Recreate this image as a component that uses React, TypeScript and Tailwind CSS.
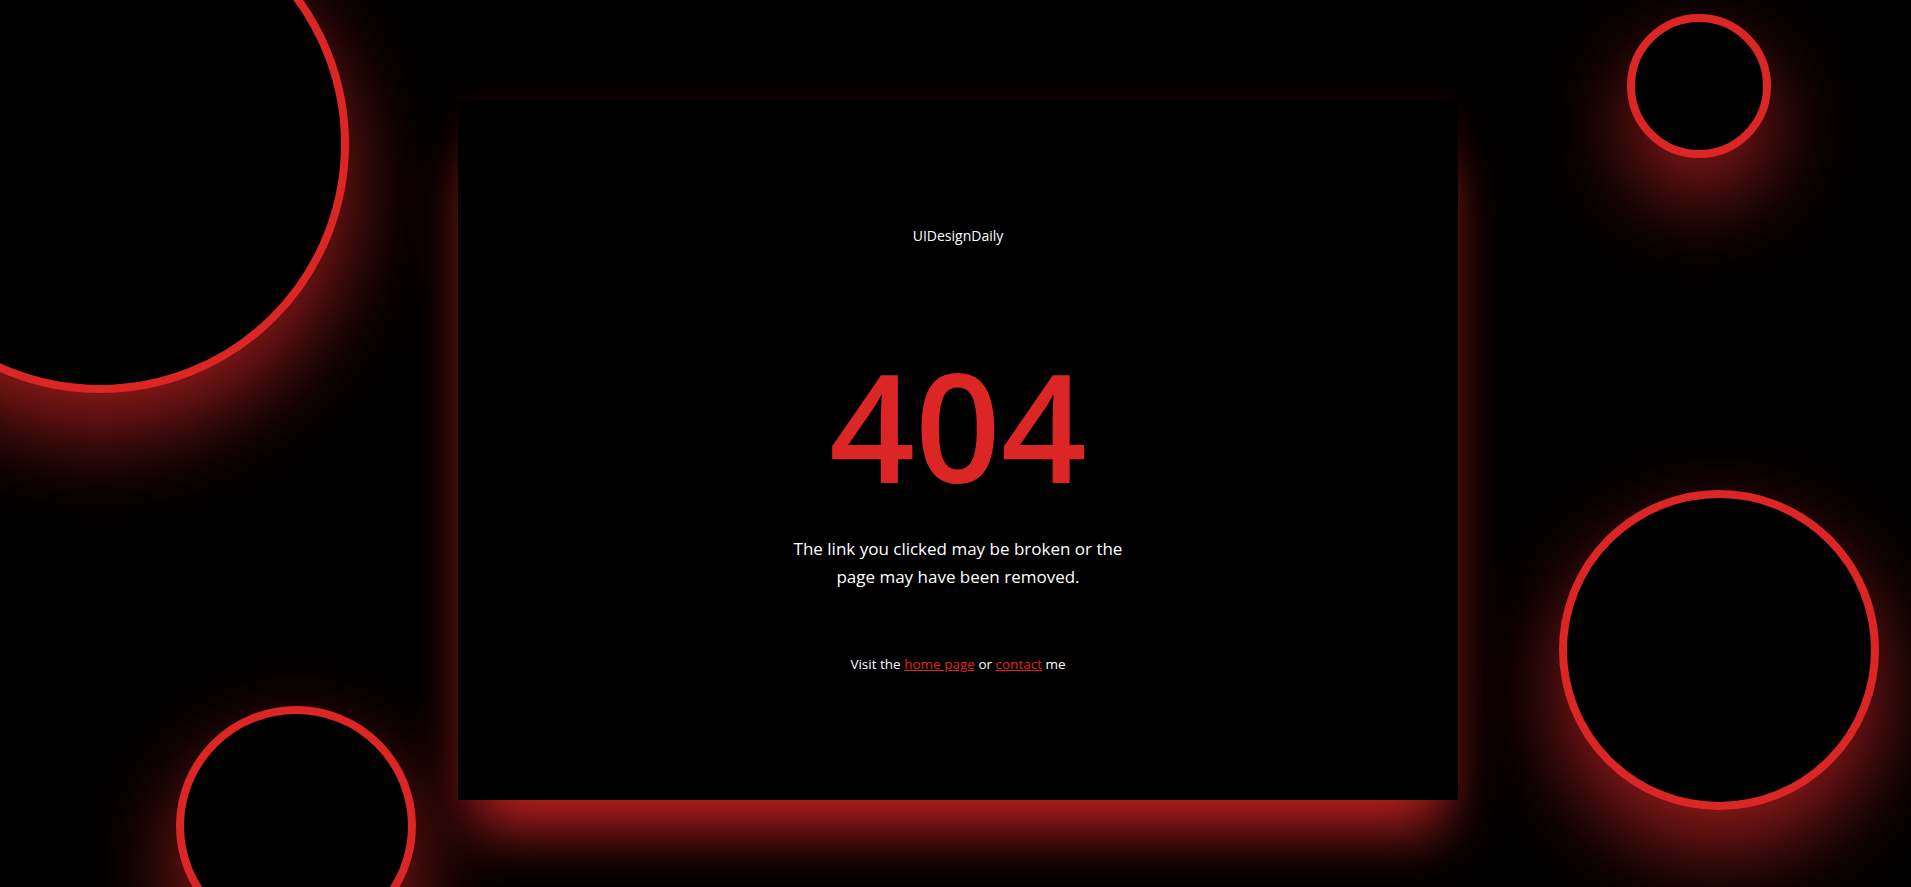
export default function App() {
  return (
    <div className="relative h-screen w-full overflow-hidden bg-black font-['Open_Sans',sans-serif]">
      {/* glowing rings */}
      <div className="absolute left-[-149px] top-[-105px] h-[498px] w-[498px] rounded-full border-[8px] border-[#dc2626] bg-black shadow-[0_40px_90px_rgba(220,38,38,0.7)]" />
      <div className="absolute left-[1627px] top-[14px] h-[144px] w-[144px] rounded-full border-[8px] border-[#dc2626] bg-black shadow-[0_40px_90px_rgba(220,38,38,0.7)]" />
      <div className="absolute left-[1559px] top-[490px] h-[320px] w-[320px] rounded-full border-[8px] border-[#dc2626] bg-black shadow-[0_40px_90px_rgba(220,38,38,0.7)]" />
      <div className="absolute left-[176px] top-[706px] h-[240px] w-[240px] rounded-full border-[8px] border-[#dc2626] bg-black shadow-[0_40px_90px_rgba(220,38,38,0.7)]" />

      <div className="relative flex justify-center pl-[5px] pt-[100px]">
        <div className="flex h-[700px] w-[1000px] flex-col items-center bg-black pt-[126px] text-center shadow-[0_45px_55px_-15px_rgba(220,38,38,0.85),0_0_30px_rgba(220,38,38,0.12)]">
          <div className="text-[14px] leading-[20px] text-white">UIDesignDaily</div>
          <h1 className="mt-[104px] text-[150px] font-semibold leading-none text-[#dc2626]">404</h1>
          <p className="mt-[35px] text-[17px] leading-[28px] text-white">
            The link you clicked may be broken or the
            <br />
            page may have been removed.
          </p>
          <p className="mt-[63px] text-[13.5px] leading-[20px] text-white">
            Visit the{" "}
            <a href="#" className="text-[#e02424] underline">
              home page
            </a>{" "}
            or{" "}
            <a href="#" className="text-[#e02424] underline">
              contact
            </a>{" "}
            me
          </p>
        </div>
      </div>
    </div>
  );
}
